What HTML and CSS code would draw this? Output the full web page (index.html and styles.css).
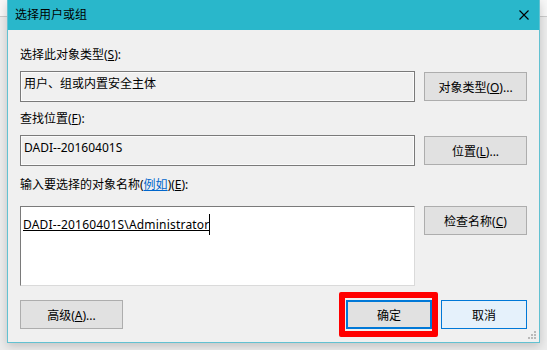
FILE: index.html
```html
<!DOCTYPE html>
<html lang="zh-CN">
<head>
    <meta charset="UTF-8">
    <title>选择用户或组</title>
    <link rel="stylesheet" href="styles.css">
</head>
<body>
    <div class="dialog">
        <div class="titlebar">
            <span class="title">选择用户或组</span>
            <button class="close">
                <svg width="10" height="10" viewBox="0 0 10 10">
                    <path d="M0.5 0.5 L9.5 9.5 M9.5 0.5 L0.5 9.5" stroke="#000" stroke-width="1.1" fill="none"/>
                </svg>
            </button>
        </div>

        <div class="content">
            <div class="field first">
                <div class="label">选择此对象类型(<u>S</u>):</div>
                <div class="row">
                    <div class="box readonly">用户、组或内置安全主体</div>
                    <button class="btn">对象类型(<u>O</u>)...</button>
                </div>
            </div>

            <div class="field">
                <div class="label">查找位置(<u>F</u>):</div>
                <div class="row">
                    <div class="box readonly">DADI--20160401S</div>
                    <button class="btn">位置(<u>L</u>)...</button>
                </div>
            </div>

            <div class="field names">
                <div class="label">输入要选择的对象名称(<a class="link">例如</a>)(<u>E</u>):</div>
                <div class="row top">
                    <div class="box editor"><span class="resolved">DADI--20160401S\Administrator</span><span class="caret"></span></div>
                    <button class="btn">检查名称(<u>C</u>)</button>
                </div>
            </div>

            <div class="footer">
                <button class="btn">高级(<u>A</u>)...</button>
                <div class="actions">
                    <button class="btn small default">确定</button>
                    <button class="btn small focus">取消</button>
                </div>
            </div>
        </div>

        <span class="grip">
            <svg width="9" height="9" viewBox="0 0 9 9">
                <rect x="6" y="0" width="2" height="2" fill="#b9b9b9"/>
                <rect x="3" y="3" width="2" height="2" fill="#b9b9b9"/>
                <rect x="6" y="3" width="2" height="2" fill="#b9b9b9"/>
                <rect x="0" y="6" width="2" height="2" fill="#b9b9b9"/>
                <rect x="3" y="6" width="2" height="2" fill="#b9b9b9"/>
                <rect x="6" y="6" width="2" height="2" fill="#b9b9b9"/>
            </svg>
        </span>
    </div>
</body>
</html>
```

FILE: styles.css
```css
body {
    margin: 0;
    width: 547px;
    height: 350px;
    overflow: hidden;
    background: linear-gradient(#f7f7f7 0, #f7f7f7 16px, #cacaca 16px, #cacaca 17px, #ececec 17px);
    font-family: "Noto Sans", "Noto Sans CJK SC", sans-serif;
    font-size: 12px;
    color: #000;
}

.dialog {
    position: relative;
    margin-left: 7px;
    width: 531px;
    height: 342px;
    background: #f0f0f0;
    border: 1px solid #62c1d1;
    border-top: 0;
    box-shadow: 0 3px 9px rgba(0, 0, 0, 0.18);
}

.titlebar {
    height: 30px;
    background: #29b7cb;
    display: flex;
    justify-content: space-between;
    align-items: center;
    padding: 0 10px 0 7px;
}

.title {
    line-height: 16px;
}

.close {
    background: none;
    border: none;
    padding: 0;
    width: 10px;
    height: 10px;
    display: flex;
}

.content {
    padding: 17px 12px 0 12px;
}

.field {
    margin-top: 9px;
}

.field.first {
    margin-top: 0;
}

.field.names {
    margin-top: 11px;
}

.label {
    line-height: 16px;
    height: 16px;
    margin-bottom: 8px;
    white-space: nowrap;
}

.field.names .label {
    margin-bottom: 13px;
}

.link {
    color: #0066cc;
    text-decoration: underline;
}

.row {
    display: flex;
    align-items: center;
    gap: 9px;
}

.row.top {
    align-items: flex-start;
}

.box {
    width: 395px;
    height: 31px;
    box-sizing: border-box;
    border: 1px solid #7a7a7a;
    padding: 4px 3px;
    line-height: 16px;
    white-space: nowrap;
}

.box.readonly {
    background: #f0f0f0;
    box-shadow: inset 0 0 0 1px #fbfbfb;
}

.box.editor {
    height: 80px;
    background: #fff;
    border-color: #7a7a7a #dadada #dadada #7a7a7a;
    padding: 7px 2px;
    line-height: 18px;
}

.resolved {
    text-decoration: underline;
    letter-spacing: 0.2px;
}

.caret {
    display: inline-block;
    width: 1px;
    height: 21px;
    background: #000;
    vertical-align: -6px;
}

.btn {
    width: 103px;
    height: 29px;
    box-sizing: border-box;
    border: 1px solid #adadad;
    background: #e1e1e1;
    font: inherit;
    color: #000;
    padding: 0;
    white-space: nowrap;
}

.footer {
    margin-top: 14px;
    display: flex;
    justify-content: space-between;
}

.actions {
    display: flex;
    gap: 9px;
}

.btn.small {
    width: 86px;
}

.btn.default {
    position: relative;
    border: 2px solid #0078d7;
}

/* red highlight drawn round the OK button */
.btn.default::after {
    content: "";
    position: absolute;
    left: -9px;
    top: -10px;
    right: -8px;
    bottom: -10px;
    border: 6px solid #ff0000;
    border-radius: 2px;
}

.btn.focus {
    border-color: #0078d7;
    background: #e5f1fb;
}

.grip {
    position: absolute;
    right: 2px;
    bottom: 2px;
    display: flex;
}
```
